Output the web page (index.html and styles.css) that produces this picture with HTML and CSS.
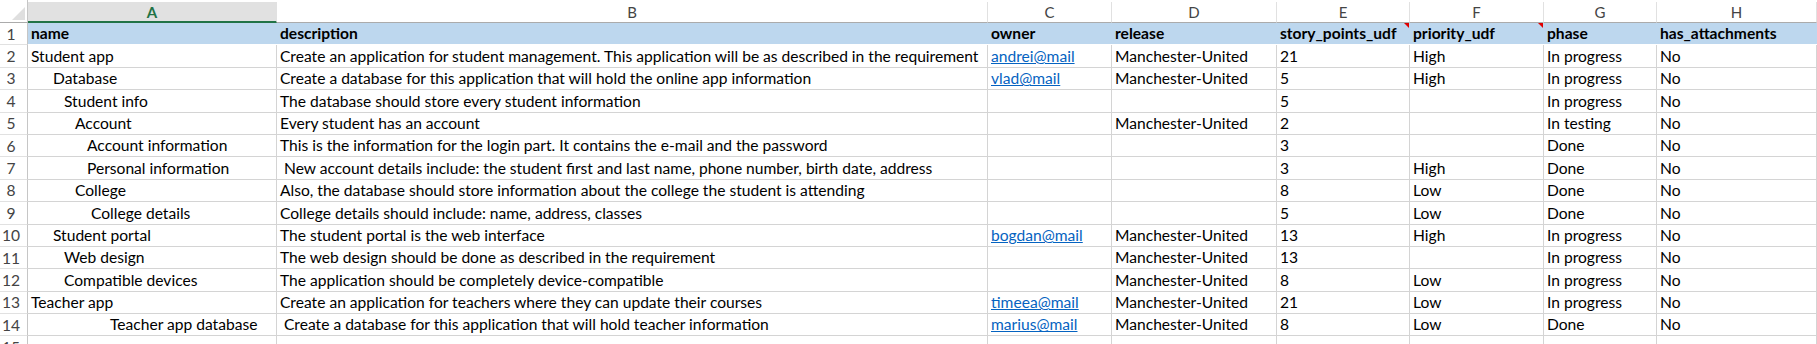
FILE: index.html
```html
<!DOCTYPE html>
<html>
  <head>
    <title>Backlog export</title>
    <meta charset="utf-8" />
    <link rel="stylesheet" href="styles.css">
  </head>
  <body>
    <div class="sheet">
      <!-- column letters -->
      <div class="corner"><span class="corner_tri"></span></div>
      <div class="col_head col_sel">A</div>
      <div class="col_head">B</div>
      <div class="col_head">C</div>
      <div class="col_head">D</div>
      <div class="col_head">E</div>
      <div class="col_head">F</div>
      <div class="col_head">G</div>
      <div class="col_head">H</div>

      <!-- row 1: field names -->
      <div class="row_num">1</div>
      <div class="cell title">name</div>
      <div class="cell title">description</div>
      <div class="cell title">owner</div>
      <div class="cell title">release</div>
      <div class="cell title note">story_points_udf</div>
      <div class="cell title note">priority_udf</div>
      <div class="cell title">phase</div>
      <div class="cell title">has_attachments</div>

      <div class="row_num">2</div>
      <div class="cell">Student app</div>
      <div class="cell">Create an application for student management. This application will be as described in the requirement</div>
      <div class="cell"><span class="link">andrei@mail</span></div>
      <div class="cell">Manchester-United</div>
      <div class="cell">21</div>
      <div class="cell">High</div>
      <div class="cell">In progress</div>
      <div class="cell">No</div>

      <div class="row_num">3</div>
      <div class="cell lvl_2">Database</div>
      <div class="cell">Create a database for this application that will hold the online app information</div>
      <div class="cell"><span class="link">vlad@mail</span></div>
      <div class="cell">Manchester-United</div>
      <div class="cell">5</div>
      <div class="cell">High</div>
      <div class="cell">In progress</div>
      <div class="cell">No</div>

      <div class="row_num">4</div>
      <div class="cell lvl_3">Student info</div>
      <div class="cell">The database should store every student information</div>
      <div class="cell"></div>
      <div class="cell"></div>
      <div class="cell">5</div>
      <div class="cell"></div>
      <div class="cell">In progress</div>
      <div class="cell">No</div>

      <div class="row_num">5</div>
      <div class="cell lvl_4">Account</div>
      <div class="cell">Every student has an account</div>
      <div class="cell"></div>
      <div class="cell">Manchester-United</div>
      <div class="cell">2</div>
      <div class="cell"></div>
      <div class="cell">In testing</div>
      <div class="cell">No</div>

      <div class="row_num">6</div>
      <div class="cell lvl_5">Account information</div>
      <div class="cell">This is the information for the login part. It contains the e-mail and the password</div>
      <div class="cell"></div>
      <div class="cell"></div>
      <div class="cell">3</div>
      <div class="cell"></div>
      <div class="cell">Done</div>
      <div class="cell">No</div>

      <div class="row_num">7</div>
      <div class="cell lvl_5">Personal information</div>
      <div class="cell pad_space">New account details include: the student first and last name, phone number, birth date, address</div>
      <div class="cell"></div>
      <div class="cell"></div>
      <div class="cell">3</div>
      <div class="cell">High</div>
      <div class="cell">Done</div>
      <div class="cell">No</div>

      <div class="row_num">8</div>
      <div class="cell lvl_4">College</div>
      <div class="cell">Also, the database should store information about the college the student is attending</div>
      <div class="cell"></div>
      <div class="cell"></div>
      <div class="cell">8</div>
      <div class="cell">Low</div>
      <div class="cell">Done</div>
      <div class="cell">No</div>

      <div class="row_num">9</div>
      <div class="cell lvl_5b">College details</div>
      <div class="cell">College details should include: name, address, classes</div>
      <div class="cell"></div>
      <div class="cell"></div>
      <div class="cell">5</div>
      <div class="cell">Low</div>
      <div class="cell">Done</div>
      <div class="cell">No</div>

      <div class="row_num">10</div>
      <div class="cell lvl_2">Student portal</div>
      <div class="cell">The student portal is the web interface</div>
      <div class="cell"><span class="link">bogdan@mail</span></div>
      <div class="cell">Manchester-United</div>
      <div class="cell">13</div>
      <div class="cell">High</div>
      <div class="cell">In progress</div>
      <div class="cell">No</div>

      <div class="row_num">11</div>
      <div class="cell lvl_3">Web design</div>
      <div class="cell">The web design should be done as described in the requirement</div>
      <div class="cell"></div>
      <div class="cell">Manchester-United</div>
      <div class="cell">13</div>
      <div class="cell"></div>
      <div class="cell">In progress</div>
      <div class="cell">No</div>

      <div class="row_num">12</div>
      <div class="cell lvl_3">Compatible devices</div>
      <div class="cell">The application should be completely device-compatible</div>
      <div class="cell"></div>
      <div class="cell">Manchester-United</div>
      <div class="cell">8</div>
      <div class="cell">Low</div>
      <div class="cell">In progress</div>
      <div class="cell">No</div>

      <div class="row_num">13</div>
      <div class="cell">Teacher app</div>
      <div class="cell">Create an application for teachers where they can update their courses</div>
      <div class="cell"><span class="link">timeea@mail</span></div>
      <div class="cell">Manchester-United</div>
      <div class="cell">21</div>
      <div class="cell">Low</div>
      <div class="cell">In progress</div>
      <div class="cell">No</div>

      <div class="row_num">14</div>
      <div class="cell lvl_7">Teacher app database</div>
      <div class="cell pad_space">Create a database for this application that will hold teacher information</div>
      <div class="cell"><span class="link">marius@mail</span></div>
      <div class="cell">Manchester-United</div>
      <div class="cell">8</div>
      <div class="cell">Low</div>
      <div class="cell">Done</div>
      <div class="cell">No</div>

      <div class="row_num">15</div>
      <div class="cell"></div>
      <div class="cell"></div>
      <div class="cell"></div>
      <div class="cell"></div>
      <div class="cell"></div>
      <div class="cell"></div>
      <div class="cell"></div>
      <div class="cell"></div>
    </div>
  </body>
</html>
```

FILE: styles.css
```css
body {
  margin: 0;
  padding: 0;
  background-color: #fff;
  overflow: hidden;
}

.sheet {
  display: grid;
  grid-template-columns: 28px 249px 711px 124px 165px 133px 134px 113px 160px;
  grid-template-rows: 23px;
  grid-auto-rows: 22.4px;
  font-family: Lato, "Liberation Sans", sans-serif;
  font-size: 15.6px;
  color: #000;
}

/* column letters */
.corner {
  position: relative;
  background-color: #fff;
  border-right: 1px solid #c6c6c6;
  border-bottom: 1px solid #ababab;
}
.corner_tri {
  position: absolute;
  right: 2px;
  bottom: 2px;
  width: 0;
  height: 0;
  border-left: 13px solid transparent;
  border-bottom: 13px solid #dfdfdf;
}
.col_head {
  display: flex;
  align-items: center;
  justify-content: center;
  margin-top: 2px;
  background-color: #fff;
  color: #444;
  border-right: 1px solid #e1e1e1;
  border-bottom: 1px solid #ababab;
  font-size: 15px;
}
.col_sel {
  background-color: #e1e1e1;
  color: #217346;
  font-weight: bold;
  border-bottom: 2px solid #217346;
}

/* row numbers */
.row_num {
  display: flex;
  align-items: center;
  justify-content: center;
  padding-right: 5px;
  color: #444;
  border-right: 1px solid #c6c6c6;
  border-bottom: 1px solid #e1e1e1;
}

/* cells */
.cell {
  display: flex;
  align-items: flex-end;
  padding: 0 0 2px 3px;
  white-space: nowrap;
  overflow: hidden;
  border-right: 1px solid #d4d4d4;
  border-bottom: 1px solid #d4d4d4;
}
.title {
  position: relative;
  background-color: #bdd7ee;
  font-weight: bold;
  border-right: 0;
  border-bottom: 1px solid #fff;
  overflow: visible;
}
.note::after {
  content: "";
  position: absolute;
  top: 0;
  right: 1px;
  width: 0;
  height: 0;
  border-left: 5px solid transparent;
  border-top: 5px solid #e00000;
}
.link {
  color: #0563c1;
  text-decoration: underline;
}

/* name indentation (leading spaces in the export) */
.lvl_2 { padding-left: 25px; }
.lvl_3 { padding-left: 36px; }
.lvl_4 { padding-left: 47px; }
.lvl_5 { padding-left: 59px; }
.lvl_5b { padding-left: 63px; }
.lvl_7 { padding-left: 82px; }
.pad_space { padding-left: 7px; }
```
